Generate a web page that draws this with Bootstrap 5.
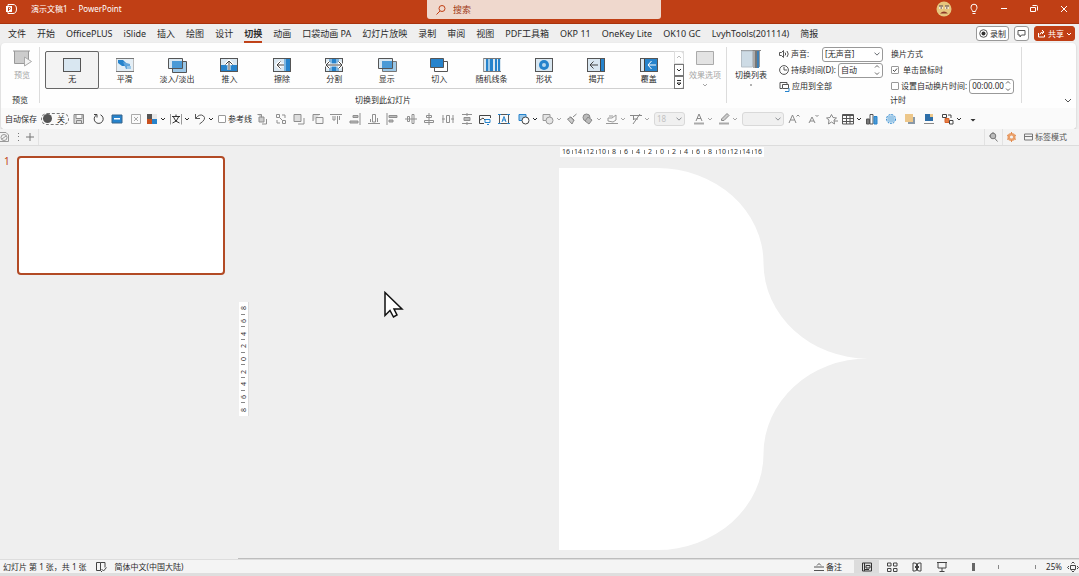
<!DOCTYPE html>
<html lang="zh-CN">
<head>
<meta charset="utf-8">
<meta name="viewport" content="width=device-width, initial-scale=1">
<title>演示文稿1 - PowerPoint</title>
<link href="https://cdn.jsdelivr.net/npm/bootstrap@5.3.0/dist/css/bootstrap.min.css" rel="stylesheet">
<style>
:root{--brand:#c03f15;--ink:#2b2b2b;--mute:#a5a5a5;--line:#dcdcdc;--blue:#2683cc;--pale:#d9e7f1}
body{font:8px/12px "Noto Sans","Noto Sans CJK SC",sans-serif;color:var(--ink);background:#efefef;overflow:hidden}
button,input,select{font:inherit;color:inherit}
button{background:none;border:0;padding:0}
svg{display:block;flex:none}
a{color:inherit;text-decoration:none}
.i12{width:12px;height:12px}
.chev{width:6px;height:6px}
.titlebar{display:grid;grid-template-columns:1fr 234px 1fr;background:var(--brand);height:24px;padding-left:9px;color:#fff;border-bottom:1px solid #a8330d}
.title-left{margin-left:-4px;gap:14px;height:18px}
.searchbox{background:#efd8cd;border-radius:0 0 3px 3px;height:19px;color:var(--brand);padding:0 8px;gap:6px}
.searchbox input{background:none;border:0;outline:0;padding:0;font-size:9px}
.searchbox input::placeholder{color:#a03a18;opacity:1}
.win-btn{width:30px;height:18px;display:flex;align-items:center;justify-content:center}
.tabs-row{height:19px;padding:0 4px 0 2px}
.tabs-row .nav-link{padding:2px 5px 0 6px;height:19px;color:var(--ink);font-size:9px;line-height:15px;white-space:nowrap}
.tabs-row .nav-link.active{font-weight:700}
.tabs-row .nav-link.active span{display:block;border-bottom:2px solid var(--brand);height:17px}
.pill{height:15px;border:1px solid #999;border-radius:3px;background:#fff;display:flex;align-items:center;justify-content:center;gap:2px;padding:0 2px}
.pill-share{background:var(--brand);border-color:var(--brand);color:#fff}
.ribbon-shell{margin:0 3px 0 1px;border-radius:4px;background:#fefefe;box-shadow:0 1px 2px #bdbdbd;overflow:hidden}
.ribbon{height:65px;padding-top:3px}
.group-box{display:flex;flex-direction:column;justify-content:space-between;position:relative}
.group-box .group-name{text-align:center;line-height:12px;height:14px}
.sep{width:1px;background:var(--line);margin:1px 0 5px}
.gallery{border:1px solid #d0d0d0;border-radius:3px;height:38px;margin:5px 0 0 5px;display:flex}
.tile{flex:1 1 0;display:flex;flex-direction:column;align-items:center;padding-top:5px;white-space:nowrap;height:36px}
.tile.on{background:#f3f3f3;outline:1px solid #666;border-radius:1px}
.tile svg{width:20px;height:16px}
.gal-scroll{width:10px;display:flex;flex-direction:column;margin:-1px}
.gal-scroll button{flex:1;border:1px solid #777;display:flex;align-items:center;justify-content:center}
.gal-scroll button:first-child{border-color:#ddd;color:#bbb}
.big-btn{display:flex;flex-direction:column;align-items:center;white-space:nowrap;gap:1px}
.off{color:var(--mute)}
.row-line{height:16px;display:flex;align-items:center;white-space:nowrap;gap:2px}
.field{border:1px solid #999;border-radius:3px;height:15px;background-color:#fff;padding:0 2px;display:flex;align-items:center;flex:none;width:45px}
.field input{border:0;outline:0;padding:0;width:100%;min-width:0;background:none}
.sel{display:block;padding:0 8px 0 2px;line-height:12px;font-size:8px;min-height:0;background-size:6px;background-position:right 2px center;border-color:#999;border-radius:3px;height:15px;color:var(--ink);flex:none}
.tick{appearance:none;width:8px;height:8px;border:1px solid #999;border-radius:1px;margin:0;background:#fff;flex:none}
.tick:checked{background:#fff url("data:image/svg+xml,%3Csvg xmlns='http://www.w3.org/2000/svg' viewBox='0 0 6 6'%3E%3Cpath d='M1 3l1.500 1.500L5 1.500' fill='none' stroke='%23444'/%3E%3C/svg%3E")}
.qat{height:21px;background:#fafafa;padding-left:4px;white-space:nowrap}
.qat button{display:flex;align-items:center;gap:2px;flex:none}
.g2{gap:2px}.g4{gap:4px}.g5{gap:5px}.g7{gap:7px}
.align-set{flex:0 0 254px;display:flex;justify-content:space-between;color:#8f8f8f}
.qat .switch{width:28px;height:12px;border:1px dashed #777;border-radius:6px;justify-content:space-between;padding-right:3px}
.switch::before{content:"";width:9px;height:9px;border-radius:50%;background:#555;margin-left:1px}
.qat .sel{background-color:#ececec;border-color:#ccc;color:#aaa;height:14px;opacity:.7}
.doc-tabs{height:17px;background:#f3f3f3;border-bottom:1px solid var(--line);color:#777}
.doc-tabs>*{border-right:1px solid #e2e2e2;height:16px}
.mode-btn{margin-right:12px}
.work{min-height:0}
.thumbs{width:238px;padding:10px 0 0 4px;gap:8px}
.thumbs .num{color:var(--brand);font:10px/10px "Noto Sans",sans-serif;width:5px}
.thumb{width:208px;height:119px;background:#fff;border:2px solid #b24a25;border-radius:4px}
.canvas-area{border-bottom:1px solid #bdbdbd;padding:0 2px 0 1px}
.ruler{background:#fff;display:flex;font:7px/10px "Noto Sans",sans-serif;color:#333}
.ruler span{flex:1 1 0;display:flex;justify-content:center;align-items:center;position:relative}
.ruler span+span::before{content:"";position:absolute;background:#888}
.ruler-h{height:10px;width:204px;margin-top:1px}
.ruler-h span+span::before{left:0;top:3px;width:1px;height:4px}
.ruler-v{writing-mode:vertical-rl;transform:rotate(180deg);height:114px;width:9px;margin-top:14px;align-self:center;box-shadow:-1px 0 #ddd}
.ruler-v span+span::before{top:0;left:3px;height:1px;width:4px}
.stage{width:205px;gap:11px}
.stage svg{overflow:visible;margin-left:-1px}
.pointer{position:absolute;left:145px;top:145px}
.status{height:14px;background:#f4f4f4;border-top:1px solid #ddd;white-space:nowrap;padding-left:3px}
.status button{display:flex;align-items:center;justify-content:center;height:13px}
.view-btn{width:25px}
.view-btn.on{background:#dcdcdc}
.foot{height:3px;background:#dedede}
.zoomer{appearance:none;width:62px;height:9px;margin:0 0 0 13px;background:linear-gradient(#888,#888) center/1px 4px no-repeat}
.zoomer::-webkit-slider-thumb{appearance:none;width:3px;height:8px;background:#666}
</style>
</head>
<body class="vh-100 d-flex flex-column">
<svg width="0" height="0" class="position-absolute" aria-hidden="true"><defs>
<g id="chev"><path d="M1 2l2 2 2-2" fill="none" stroke="currentColor"/></g>
<g id="frame"><rect x="1.500" y="1.500" width="17" height="13" fill="#d9e7f1" stroke="#555"/></g>
</defs></svg>

<header class="titlebar">
  <div class="title-left d-flex align-items-center">
    <svg class="i12" viewBox="0 0 12 12"><path d="M3 1.500h5a3.500 4.500 0 0 1 0 9H3z" fill="none" stroke="#fff"/><rect x="1" y="3" width="6" height="6" fill="#fff"/><path d="M3.500 8V4.500h1a1 1 0 0 1 0 2h-1" fill="none" stroke="#c03f15"/></svg>
    <span>演示文稿1&nbsp; -&nbsp; PowerPoint</span>
  </div>
  <label class="searchbox d-flex align-items-center">
    <svg class="i12" viewBox="0 0 12 12" fill="none" stroke="currentColor"><circle cx="7" cy="4.500" r="3"/><path d="M5 7L1.500 10.500"/></svg>
    <input type="search" placeholder="搜索" aria-label="搜索">
  </label>
  <div class="d-flex justify-content-end">
    <button class="win-btn" aria-label="账户"><svg width="16" height="16" viewBox="0 0 16 16"><circle cx="8" cy="8" r="7.500" fill="#e6c77e"/><path d="M3 4.500h4v3.500H3zM9 4.500h4v3.500H9z" fill="#f6ead0"/><path d="M3 5h4M9 5h4M4.500 7h1.500M10 7h1.500" stroke="#4a3325"/><path d="M4 12.500q4-4 8 0z" fill="#8c3b2a"/></svg></button>
    <button class="win-btn" aria-label="提示"><svg class="i12" viewBox="0 0 12 12" fill="none" stroke="#fff"><path d="M4.500 8.500C4.500 7 3 6.500 3 4.200a3 3 0 0 1 6 0C9 6.500 7.500 7 7.500 8.500zM4.500 10.500h3"/></svg></button>
    <button class="win-btn" aria-label="最小化"><svg class="i12" viewBox="0 0 12 12"><path d="M3 5.500h6" stroke="#fff"/></svg></button>
    <button class="win-btn" aria-label="还原"><svg class="i12" viewBox="0 0 12 12" fill="none" stroke="#fff"><path d="M2.500 4.500h5v4h-5zM4.500 2.500h4q1 0 1 1v4"/></svg></button>
    <button class="win-btn" aria-label="关闭"><svg class="i12" viewBox="0 0 12 12" stroke="#fff"><path d="M3 3l6 6M9 3L3 9"/></svg></button>
  </div>
</header>

<nav class="tabs-row d-flex align-items-center">
  <div class="nav flex-nowrap me-auto">
    <a class="nav-link" href="#">文件</a><a class="nav-link" href="#">开始</a><a class="nav-link" href="#">OfficePLUS</a><a class="nav-link" href="#">iSlide</a><a class="nav-link" href="#">插入</a><a class="nav-link" href="#">绘图</a><a class="nav-link" href="#">设计</a><a class="nav-link active" href="#"><span>切换</span></a><a class="nav-link" href="#">动画</a><a class="nav-link" href="#">口袋动画 PA</a><a class="nav-link" href="#">幻灯片放映</a><a class="nav-link" href="#">录制</a><a class="nav-link" href="#">审阅</a><a class="nav-link" href="#">视图</a><a class="nav-link" href="#">PDF工具箱</a><a class="nav-link" href="#">OKP 11</a><a class="nav-link" href="#">OneKey Lite</a><a class="nav-link" href="#">OK10 GC</a><a class="nav-link" href="#">LvyhTools(201114)</a><a class="nav-link" href="#">简报</a>
  </div>
  <div class="d-flex g5">
    <button class="pill"><svg width="9" height="9" viewBox="0 0 9 9"><circle cx="4.500" cy="4.500" r="3.800" fill="none" stroke="#555"/><circle cx="4.500" cy="4.500" r="2" fill="#333"/></svg>录制</button>
    <button class="pill" aria-label="批注"><svg width="9" height="9" viewBox="0 0 9 9"><path d="M1 1.500h7v4.500H4.500L3 8V6H1z" fill="none" stroke="#555"/></svg></button>
    <button class="pill pill-share"><svg width="9" height="9" viewBox="0 0 9 9" fill="none" stroke="#fff"><path d="M1.500 4v4h6V6M3 5.500q0-2 3-2.500M5 1l2 2-2 2"/></svg>共享<svg class="chev" viewBox="0 0 6 6"><use href="#chev"/></svg></button>
  </div>
</nav>

<section class="ribbon-shell">
  <div class="ribbon d-flex">
    <div class="group-box" style="width:38px">
      <button class="big-btn off ps-1 pt-1"><svg width="22" height="18" viewBox="0 0 22 18"><path d="M2 1h17M3.500 1v12.500h14V1" fill="#ccc" stroke="#999"/><path d="M13.500 7v9l7-4.500z" fill="#f4f4f4" stroke="#aaa"/></svg>预览</button>
      <div class="group-name">预览</div>
    </div>
    <div class="sep"></div>
    <div class="group-box flex-grow-1">
      <div class="d-flex">
        <div class="gallery flex-grow-1">
          <button class="tile on"><svg viewBox="0 0 20 16"><use href="#frame"/></svg>无</button>
          <button class="tile"><svg viewBox="0 0 20 16"><rect x="1.500" y="1.500" width="17" height="13" fill="#e4eef5" stroke="#bbb"/><path d="M1 1.500h18M1 14.500h18" stroke="#777"/><path d="M3 3h5l3 3v3H7L3 6z" fill="#2683cc"/><path d="M8 5l7 2v5h-4z" fill="#62a5db"/><path d="M12 9h4v3h-4z" fill="#9cc8e8"/></svg>平滑</button>
          <button class="tile"><svg viewBox="0 0 20 16"><path d="M5.500 4.500h14v11h-14z" fill="#9cc8e8" stroke="#555"/><path d="M1.500 1.500h14v10h-14z" fill="#d9e7f1" stroke="#555"/><path d="M5 4h10v7H5z" fill="#4b9ad6"/></svg>淡入/淡出</button>
          <button class="tile"><svg viewBox="0 0 20 16"><use href="#frame"/><path d="M2 8h16v6H2z" fill="#2683cc"/><path d="M10 13V4M6.500 7.500L10 4l3.500 3.500" fill="none" stroke="#fff" stroke-width="3"/><path d="M10 13V4M6.500 7.500L10 4l3.500 3.500" fill="none" stroke="#444"/></svg>推入</button>
          <button class="tile"><svg viewBox="0 0 20 16"><use href="#frame"/><path d="M12 2h3v12h-3z" fill="#7db5e0"/><path d="M14 2h4v12h-4z" fill="#2683cc"/><path d="M12 8H5M8.500 4.500L5 8l3.500 3.500" fill="none" stroke="#fff" stroke-width="3"/><path d="M12 8H5M8.500 4.500L5 8l3.500 3.500" fill="none" stroke="#444"/></svg>擦除</button>
          <button class="tile"><svg viewBox="0 0 20 16"><use href="#frame"/><path d="M5 2h10v12H5z" fill="#7db5e0"/><path d="M8 2h4v12H8z" fill="#2683cc"/><path d="M2 8h16M5.500 4.500L2 8l3.500 3.500M14.500 4.500L18 8l-3.500 3.500" fill="none" stroke="#fff" stroke-width="3"/><path d="M2 8h16M5.500 4.500L2 8l3.500 3.500M14.500 4.500L18 8l-3.500 3.500" fill="none" stroke="#444"/></svg>分割</button>
          <button class="tile"><svg viewBox="0 0 20 16"><path d="M5.500 4.500h14v10h-14z" fill="#9cc8e8" stroke="#777"/><path d="M1.500 1.500h14v10h-14z" fill="#d9e7f1" stroke="#555"/><path d="M5 4h10v7H5z" fill="#4b9ad6"/></svg>显示</button>
          <button class="tile"><svg viewBox="0 0 20 16"><path d="M5.500 4.500h13v10h-13z" fill="#fff" stroke="#555"/><path d="M1.500 1.500h13v9h-13z" fill="#2683cc" stroke="#555"/></svg>切入</button>
          <button class="tile"><svg viewBox="0 0 20 16"><rect x="1" y="1" width="18" height="14" fill="#d9e7f1"/><path d="M1 1.500h18M1 14.500h18" stroke="#777"/><path d="M1.500 1v14" stroke="#999"/><path d="M4 2h2v12H4zM8 2h3v12H8zM13 2h2v12h-2zM16 2h2v12h-2z" fill="#2683cc"/><path d="M6 2h2v12H6z" fill="#9cc8e8"/></svg>随机线条</button>
          <button class="tile"><svg viewBox="0 0 20 16"><use href="#frame"/><circle cx="10" cy="8" r="5" fill="#2683cc"/><circle cx="10" cy="8" r="2" fill="#b7d7ee"/></svg>形状</button>
          <button class="tile"><svg viewBox="0 0 20 16"><use href="#frame"/><path d="M15 2h3v12h-3z" fill="#2683cc"/><path d="M14.500 2v12M12 8H4M7.500 4.500L4 8l3.500 3.500" fill="none" stroke="#444"/></svg>揭开</button>
          <button class="tile"><svg viewBox="0 0 20 16"><use href="#frame"/><path d="M6 2h12v12H6z" fill="#2683cc"/><path d="M5.500 2v12" stroke="#444"/><path d="M17 8H9M12.500 4L9 8l3.500 4" fill="none" stroke="#fff"/></svg>覆盖</button>
          <div class="gal-scroll">
            <button aria-label="上一行"><svg class="chev" viewBox="0 0 6 6"><path d="M1 4l2-2 2 2" fill="none" stroke="currentColor"/></svg></button>
            <button aria-label="下一行"><svg class="chev" viewBox="0 0 6 6"><use href="#chev"/></svg></button>
            <button aria-label="其他"><svg class="chev" viewBox="0 0 6 6"><path d="M1 .5h4M1 3h4L3 5z" fill="none" stroke="currentColor"/></svg></button>
          </div>
        </div>
        <button class="big-btn off px-1 pt-1" style="width:42px"><svg width="20" height="18" viewBox="0 0 20 18"><path d="M1.500 1.500h17v13h-17z" fill="#e3e3e3" stroke="#aaa"/></svg>效果选项<svg class="chev" viewBox="0 0 6 6"><use href="#chev"/></svg></button>
      </div>
      <div class="group-name">切换到此幻灯片</div>
    </div>
    <div class="sep"></div>
    <button class="big-btn pt-1" style="width:48px"><svg width="20" height="18" viewBox="0 0 20 18"><path d="M0 .5h20" stroke="#888"/><path d="M.5 1h11v16H.5z" fill="#cddbe5" stroke="#b5bfc7"/><path d="M12 1h2v17h-2z" fill="#aaa"/><path d="M14 1h2v17h-2z" fill="#777"/><path d="M16 1h2v17h-2z" fill="#3d7fb5"/><path d="M18.500 1v16" stroke="#999"/></svg>切换列表<svg class="chev" viewBox="0 0 6 6"><path d="M2 3h2" stroke="#666"/></svg></button>
    <div class="group-box" style="width:246px">
      <div class="d-flex ps-1 gap-2">
        <div style="width:104px">
          <div class="row-line"><svg width="10" height="10" viewBox="0 0 10 10" fill="none" stroke="#555"><path d="M.5 3.500h2l2-2v7l-2-2h-2zM6 3.500q1.500 1.500 0 3M8 2q2.500 3 0 6"/></svg><label for="snd" class="me-auto">声音:</label><select id="snd" class="form-select sel" style="width:61px"><option>[无声音]</option></select></div>
          <div class="row-line"><svg width="10" height="10" viewBox="0 0 10 10" fill="none" stroke="#555"><circle cx="5" cy="5" r="4.400"/><path d="M5 2v3h3"/></svg><label for="dur" class="me-auto">持续时间(D):</label><div class="field"><input id="dur" value="自动"><svg width="6" height="12" viewBox="0 0 6 12" fill="none" stroke="#666"><path d="M1 3.500l2-2 2 2M1 8.500l2 2 2-2"/></svg></div></div>
          <button class="row-line"><svg width="11" height="11" viewBox="0 0 11 11" fill="none" stroke="#555"><path d="M3 7.500H1v-6h7V3M3.500 3.500h6v4h-6z"/><path d="M6 10.500h4V7" stroke="#2683cc"/></svg>应用到全部</button>
        </div>
        <div>
          <div class="row-line">换片方式</div>
          <label class="row-line g4"><input type="checkbox" class="tick" checked>单击鼠标时</label>
          <div class="row-line"><input type="checkbox" id="auto" class="tick"><label for="auto">设置自动换片时间:</label><div class="field"><input value="00:00.00" aria-label="换片时间"><svg width="6" height="12" viewBox="0 0 6 12" fill="none" stroke="#666"><path d="M1 3.500l2-2 2 2M1 8.500l2 2 2-2"/></svg></div></div>
        </div>
      </div>
      <div class="group-name">计时</div>
    </div>
    <div class="sep"></div>
    <div class="d-flex align-items-end justify-content-end" style="width:54px"><button class="p-1" aria-label="折叠功能区"><svg width="8" height="6" viewBox="0 0 8 6"><path d="M1 1l3 3 3-3" fill="none" stroke="#555"/></svg></button></div>
  </div>

  <div class="qat d-flex align-items-center">
    <span>自动保存</span>
    <button class="switch ms-1" role="switch" aria-checked="false">关</button>
    <div class="d-flex ms-1 g7">
      <button aria-label="保存"><svg class="i12" viewBox="0 0 12 12" fill="#ddd" stroke="#888"><path d="M1 1.500h9.500v9H1zM3 1.500v4h6v-4M3.500 10.500v-3h5v3"/></svg></button>
      <button aria-label="重做"><svg class="i12" viewBox="0 0 12 12" fill="none" stroke="#444"><path d="M2 1.500h3v3M4.500 2a4.500 4.500 0 1 0 4-.2"/></svg></button>
      <button aria-label="幻灯片"><svg class="i12" viewBox="0 0 12 12"><path d="M1 2h10v8H1z" fill="#2683cc" stroke="#39658a"/><path d="M3 5h6v1.500H3z" fill="#fff"/></svg></button>
      <button aria-label="删除"><svg class="i12" viewBox="0 0 12 12" fill="none" stroke="#aaa"><path d="M1.500 1.500h9v9h-9zM4 4l4 4M8 4L4 8"/></svg></button>
    </div>
    <button class="ms-1" aria-label="配色"><svg class="i12" viewBox="0 0 12 12"><path d="M1 1h5v5H1z" fill="#555"/><path d="M6 1h5v5H6z" fill="#e8e8e8"/><path d="M1 6h5v5H1z" fill="#c8501f"/><path d="M6 6h5v5H6z" fill="#2683cc"/></svg><svg class="chev" viewBox="0 0 6 6"><use href="#chev"/></svg></button>
    <button class="ms-1" aria-label="字体"><svg class="i12" viewBox="0 0 12 12" fill="none" stroke="#333"><path d="M.5 1v10.500M11.500 1v10.500" stroke="#999"/><path d="M6 1.500v2M2 3.500h8M3.500 4Q5 9 9.500 10M8.500 4Q7 9 2.500 10"/></svg><svg class="chev" viewBox="0 0 6 6"><use href="#chev"/></svg></button>
    <button class="ms-1" aria-label="撤消"><svg class="i12" viewBox="0 0 12 12" fill="none" stroke="#555"><path d="M1.500 1v4.500H6M1.500 5.500Q6 0 9.500 3T5.500 11"/></svg><svg class="chev" viewBox="0 0 6 6"><use href="#chev"/></svg></button>
    <label class="d-flex align-items-center ms-1 g2"><input type="checkbox" class="tick">参考线</label>
    <div class="align-set ms-1">
      <button aria-label="置于顶层"><svg class="i12" viewBox="0 0 12 12" fill="none" stroke="currentColor"><path d="M1.500 1.500h4v3M3 4h5v5H3z" fill="#ccc"/><path d="M10.500 6v5H6"/></svg></button>
      <button aria-label="组合"><svg class="i12" viewBox="0 0 12 12" fill="none" stroke="currentColor"><path d="M1.500 1.500h3v3h-3zM7 2h3v3M2 7v3h3M7.500 7.500h3v3h-3zM4.500 4.500l3 3"/></svg></button>
      <button aria-label="上移"><svg class="i12" viewBox="0 0 12 12" fill="#ddd" stroke="currentColor"><path d="M1 1.500h7v7H1z"/><path d="M11 5v6H5" fill="none"/></svg></button>
      <button aria-label="下移"><svg class="i12" viewBox="0 0 12 12" fill="#ddd" stroke="currentColor"><path d="M1 8V1.500h7"/><path d="M4 4.500h7v6H4z" fill="#f4f4f4"/></svg></button>
      <button aria-label="顶端对齐"><svg class="i12" viewBox="0 0 12 12" fill="none" stroke="currentColor"><path d="M0 1.500h12M3 3v4h2V3M7.500 3v8M9.500 3v4"/></svg></button>
      <button aria-label="右对齐"><svg class="i12" viewBox="0 0 12 12" fill="#bbb" stroke="currentColor"><path d="M11 0v12M4 2.500h5v2H4zM1 8h8v2H1z"/></svg></button>
      <button aria-label="底端对齐"><svg class="i12" viewBox="0 0 12 12" fill="none" stroke="currentColor"><path d="M0 10.500h12M2.500 6v3M4.500 1.500h3V9h-3zM9.500 5v4"/></svg></button>
      <button aria-label="左对齐"><svg class="i12" viewBox="0 0 12 12" fill="#bbb" stroke="currentColor"><path d="M1 0v12M3 2.500h8v2H3zM3 7h4v2H3z"/></svg></button>
      <button aria-label="垂直居中"><svg class="i12" viewBox="0 0 12 12" fill="none" stroke="currentColor"><path d="M0 6h12M2.500 3.500h2v5h-2zM7 1.500h2v9H7z"/></svg></button>
      <button aria-label="水平居中"><svg class="i12" viewBox="0 0 12 12" fill="none" stroke="currentColor"><path d="M6 0v12M3.500 2.500h5v2h-5zM1.500 7.500h9v2h-9z"/></svg></button>
      <button aria-label="横向分布"><svg class="i12" viewBox="0 0 12 12" fill="none" stroke="currentColor"><path d="M1 2v8M11 2v8M0 6h3M9 6h3M4.500 2.500h3v7h-3z"/></svg></button>
      <button aria-label="纵向分布"><svg class="i12" viewBox="0 0 12 12" fill="#bbb" stroke="currentColor"><path d="M1 1.500h10M1 10.500h10M3 4.500h6v3H3zM6 0v3M6 9v3"/></svg></button>
      <button aria-label="图片"><svg class="i12" viewBox="0 0 12 12" fill="none" stroke="#444"><path d="M5 10.500H.5v-8h11V5M1 7l3-2 2 2"/><path d="M6 6.500h5v3H6zM8 11.500h2" stroke="#2683cc"/></svg></button>
      <button aria-label="文本框"><svg class="i12" viewBox="0 0 12 12" fill="none" stroke="#2683cc"><path d="M1.500 1.500h9v9h-9z" stroke="#555"/><path d="M0 1.500h3M9 1.500h3M0 10.500h3M9 10.500h3M4 9l2-5.500L8 9M4.500 7h3"/></svg></button>
    </div>
    <div class="d-flex ms-2 off g4">
      <button aria-label="形状"><svg class="i12" viewBox="0 0 12 12"><path d="M1 1.500h7v6H1z" fill="#9cc8e8" stroke="#2683cc"/><circle cx="7.500" cy="7.500" r="3.500" fill="#fff" stroke="#444"/></svg><svg class="chev text-dark" viewBox="0 0 6 6"><use href="#chev"/></svg></button>
      <button aria-label="合并"><svg class="i12" viewBox="0 0 12 12" fill="#e5e5e5" stroke="#999"><path d="M1 1.500h7v6H1z"/><circle cx="7.500" cy="7.500" r="3.500"/></svg><svg class="chev" viewBox="0 0 6 6"><use href="#chev"/></svg></button>
      <button aria-label="格式刷"><svg class="i12" viewBox="0 0 12 12" fill="#ccc" stroke="#888"><path d="M10.500 1L7 4M4 3.500l4 4M1.500 6L5 4l3 3-2 4z"/></svg></button>
      <button aria-label="填充"><svg class="i12" viewBox="0 0 12 12" fill="#bbb" stroke="#888"><circle cx="4.500" cy="4.500" r="3.500"/><path d="M6 4l4 3-3 4-4-3z"/></svg><svg class="chev" viewBox="0 0 6 6"><use href="#chev"/></svg></button>
      <button aria-label="轮廓"><svg class="i12" viewBox="0 0 12 12" fill="none" stroke="#999"><path d="M0 10.500h12M2 8V5h4l4-3v5L7 9zM3 3h4"/></svg><svg class="chev" viewBox="0 0 6 6"><use href="#chev"/></svg></button>
      <button aria-label="效果"><svg class="i12" viewBox="0 0 12 12" fill="none" stroke="#888"><path d="M0 2.500h12M3.500 2.500V7M10 1L3 11M3 6h5"/></svg><svg class="chev" viewBox="0 0 6 6"><use href="#chev"/></svg></button>
    </div>
    <select class="form-select sel ms-1" style="width:31px" aria-label="字号" disabled><option>18</option></select>
    <div class="d-flex off ms-2 g5">
      <button aria-label="字体颜色"><svg class="i12" viewBox="0 0 12 12" fill="none" stroke="#888"><path d="M3 8l3-7 3 7M4 5.500h4"/><path d="M1 10.500h10" stroke="#aaa" stroke-width="2"/></svg><svg class="chev" viewBox="0 0 6 6"><use href="#chev"/></svg></button>
      <button aria-label="突出显示"><svg class="i12" viewBox="0 0 12 12" fill="#ccc" stroke="#888"><path d="M9 .5l2 2L6 7.500H3.500V6z"/><path d="M1 10.500h10" stroke="#aaa" stroke-width="2"/></svg><svg class="chev" viewBox="0 0 6 6"><use href="#chev"/></svg></button>
    </div>
    <select class="form-select sel ms-1" style="width:42px" aria-label="字体" disabled><option></option></select>
    <div class="d-flex off ms-1 g7">
      <button aria-label="增大字号"><svg class="i12" viewBox="0 0 12 12" fill="none" stroke="#888"><path d="M1 10l3.500-8L8 10M2.500 7h4M8.500 3.500L10 2l1.500 1.500"/></svg></button>
      <button aria-label="减小字号"><svg class="i12" viewBox="0 0 12 12" fill="none" stroke="#888"><path d="M2 10l3-6 3 6M3 8h4M8.500 2L10 3.500 11.500 2"/></svg></button>
      <button aria-label="动画"><svg class="i12" viewBox="0 0 12 12" fill="none" stroke="#888"><path d="M5.500 1.500L7 4.500l3.500.500L8 7l.5 4-3-2-3 2 .5-4L.5 5l3.500-.5zM8 8h4"/></svg></button>
    </div>
    <button class="ms-1" aria-label="表格"><svg class="i12" viewBox="0 0 12 12" fill="none" stroke="#555"><path d="M.5 1.500h11v9.500H.5zM.5 2.500h11M.5 5.500h11M.5 8.500h11M4.500 2v9M8 2v9"/></svg><svg class="chev" viewBox="0 0 6 6"><use href="#chev"/></svg></button>
    <div class="d-flex ms-1 g7">
      <button aria-label="图表"><svg class="i12" viewBox="0 0 12 12" stroke="#555"><path d="M.5 6h3v5h-3z" fill="#777"/><path d="M4 1.500h3V11H4z" fill="#fff"/><path d="M8 3.500h3V11H8z" fill="#4b9ad6" stroke="#2683cc"/></svg></button>
      <button aria-label="选择"><svg class="i12" viewBox="0 0 12 12"><circle cx="6" cy="6" r="3.800" fill="#9cc8e8"/><circle cx="6" cy="6" r="4.500" fill="none" stroke="#2683cc" stroke-dasharray="2 1"/></svg></button>
      <button aria-label="置顶"><svg class="i12" viewBox="0 0 12 12"><path d="M4 4h7v7H4z" fill="#8a99a8"/><path d="M1 1h8v8H1z" fill="#edc78a"/></svg></button>
      <button aria-label="置底"><svg class="i12" viewBox="0 0 12 12"><path d="M2 1h8v7H2z" fill="#2d6ea8"/><path d="M7 1h3v3H7z" fill="#edc78a"/><path d="M1 10.500h10" stroke="#888"/></svg></button>
      <button aria-label="替换"><svg class="i12" viewBox="0 0 12 12" fill="#fff" stroke="#444"><path d="M.5 1.500h4v3h-4zM6 2h3v3"/><path d="M3 5.500h4v4H3z" fill="#e67e45" stroke="#d9622b"/><path d="M7.500 7.500h3.500v3.500H7.500z"/></svg><svg class="chev" viewBox="0 0 6 6"><use href="#chev"/></svg></button>
      <button aria-label="自定义"><svg width="8" height="8" viewBox="0 0 8 8"><path d="M2 2h4M1.500 4h5L4 6.500z" fill="#333"/></svg></button>
    </div>
  </div>
</section>

<div class="doc-tabs d-flex align-items-center">
  <div class="d-flex align-items-center g2 pe-1 me-auto">
    <button aria-label="最近"><svg class="i12" viewBox="0 0 12 12" fill="none" stroke="#999"><path d="M0 1.500h6L8.500 4v6.500H0"/><circle cx="4" cy="6.500" r="3"/><path d="M2 8l4-3"/></svg></button>
    <svg class="ms-1 me-1" width="2" height="12" viewBox="0 0 2 12"><path d="M0 2h1v1H0zM0 5h1v1H0zM0 9h1v1H0z" fill="#777"/></svg>
    <button aria-label="新建标签"><svg width="8" height="8" viewBox="0 0 8 8"><path d="M4 0v8M0 4h8" stroke="#777"/></svg></button>
  </div>
  <button class="px-1" style="border-left:1px solid #e2e2e2" aria-label="查找"><svg width="9" height="10" viewBox="0 0 9 10" fill="#bbb" stroke="#777"><circle cx="4" cy="4" r="2.800"/><path d="M5.500 6l3 3.500M0 4h1.500M4 0v1"/></svg></button>
  <button class="ps-1 border-0" aria-label="设置"><svg width="9" height="10" viewBox="0 0 9 10"><circle cx="4.500" cy="5" r="2.800" fill="none" stroke="#eaa06a" stroke-width="2.500"/><path d="M4.500 0v2M4.500 8v2M0 3l1.500 1M9 3L7.500 4M0 7.500l1.500-1M9 7.500l-1.500-1" stroke="#e08a50"/></svg></button>
  <button class="mode-btn d-flex align-items-center g2 ps-2 border-0" style="color:#555"><svg width="9" height="8" viewBox="0 0 9 8" fill="none" stroke="#777"><path d="M.5 1h8v6h-8zM.5 3.500h8"/></svg>标签模式</button>
</div>

<main class="work d-flex flex-grow-1">
  <aside class="thumbs d-flex align-items-start flex-shrink-0">
    <span class="num">1</span>
    <div class="thumb"></div>
  </aside>
  <div class="canvas-area d-flex flex-grow-1 position-relative">
    <div class="ruler ruler-v"><span>8</span><span>6</span><span>4</span><span>2</span><span>0</span><span>2</span><span>4</span><span>6</span><span>8</span></div>
    <div class="stage d-flex flex-column mx-auto">
      <div class="ruler ruler-h"><span>16</span><span>14</span><span>12</span><span>10</span><span>8</span><span>6</span><span>4</span><span>2</span><span>0</span><span>2</span><span>4</span><span>6</span><span>8</span><span>10</span><span>12</span><span>14</span><span>16</span></div>
      <svg width="309" height="382" viewBox="0 0 309 382"><path d="M0 0H98A106.500 95 0 0 1 204.500 95A104.500 95.500 0 0 0 309 190.500A104.500 95.500 0 0 0 204.500 286A106.500 96 0 0 1 98 382H0Z" fill="#fff"/></svg>
    </div>
    <svg class="pointer" width="22" height="28" viewBox="0 0 22 28"><path d="M2 1.500v23l5-5 3.500 6.500 3.500-2-3-6H19z" fill="#fff" stroke="#111" stroke-width="1.500"/></svg>
  </div>
</main>

<footer>
  <div class="status d-flex align-items-center">
    <span>幻灯片 第 1 张，共 1 张</span>
    <button class="mx-2" aria-label="拼写检查"><svg class="i12" viewBox="0 0 12 12" fill="none" stroke="#444"><path d="M5.500 9.500H1.500v-8h4v8l1.500 1.500M5.500 1.500h4.500v5M6.500 8l2 2 3-3.500"/></svg></button>
    <span class="me-auto">简体中文(中国大陆)</span>
    <button class="g2 me-2 pe-1"><svg width="10" height="10" viewBox="0 0 10 10" fill="none" stroke="#555"><path d="M0 5h10M0 8.500h10M3 3.500L5 1.500l2 2"/></svg>备注</button>
    <button class="view-btn on" aria-label="普通视图"><svg class="i12" viewBox="0 0 12 12" fill="none" stroke="#333"><path d="M1.500 2h9v8h-9zM3.500 2v8M5 4.500h4v2.500H5zM4 8.500h4"/></svg></button>
    <button class="view-btn" aria-label="浏览"><svg class="i12" viewBox="0 0 12 12" fill="none" stroke="#444"><path d="M1.500 2h3.500v3H1.500zM7.500 2H11v3H7.500zM1.500 7.500h3.500v3H1.500zM7.500 7.500H11v3H7.500z"/></svg></button>
    <button class="view-btn" aria-label="阅读"><svg class="i12" viewBox="0 0 12 12" fill="none" stroke="#444"><path d="M2 10V2h2l2 1 2-1h2v8H8L6 9l-2 1z"/><path d="M4 6h4M6 3v6" stroke-width="2"/></svg></button>
    <button class="view-btn" aria-label="放映"><svg class="i12" viewBox="0 0 12 12" fill="none" stroke="#444"><path d="M1 1.500h10M2 2v5h8V2M6 7v3M3.500 10.500h5"/></svg></button>
    <input type="range" class="zoomer" min="0" max="100" value="8" aria-label="缩放">
    <button aria-label="放大" style="width:12px"><svg width="3" height="4" viewBox="0 0 3 4"><path d="M1.500 0v4" stroke="#888"/></svg></button>
    <button class="ms-1" style="width:18px">25%</button>
    <button class="ms-1" aria-label="适应窗口"><svg class="i12" viewBox="0 0 12 12" fill="none" stroke="#444"><path d="M3.500 4.500h5v4h-5zM4.500 2.500L6 1l1.500 1.500M4.500 9.500L6 11l1.500-1.500M2 5L.5 6.500 2 8M10 5l1.500 1.500L10 8"/></svg></button>
  </div>
  <div class="foot"></div>
</footer>
<script src="https://cdn.jsdelivr.net/npm/bootstrap@5.3.0/dist/js/bootstrap.bundle.min.js"></script>
</body>
</html>
